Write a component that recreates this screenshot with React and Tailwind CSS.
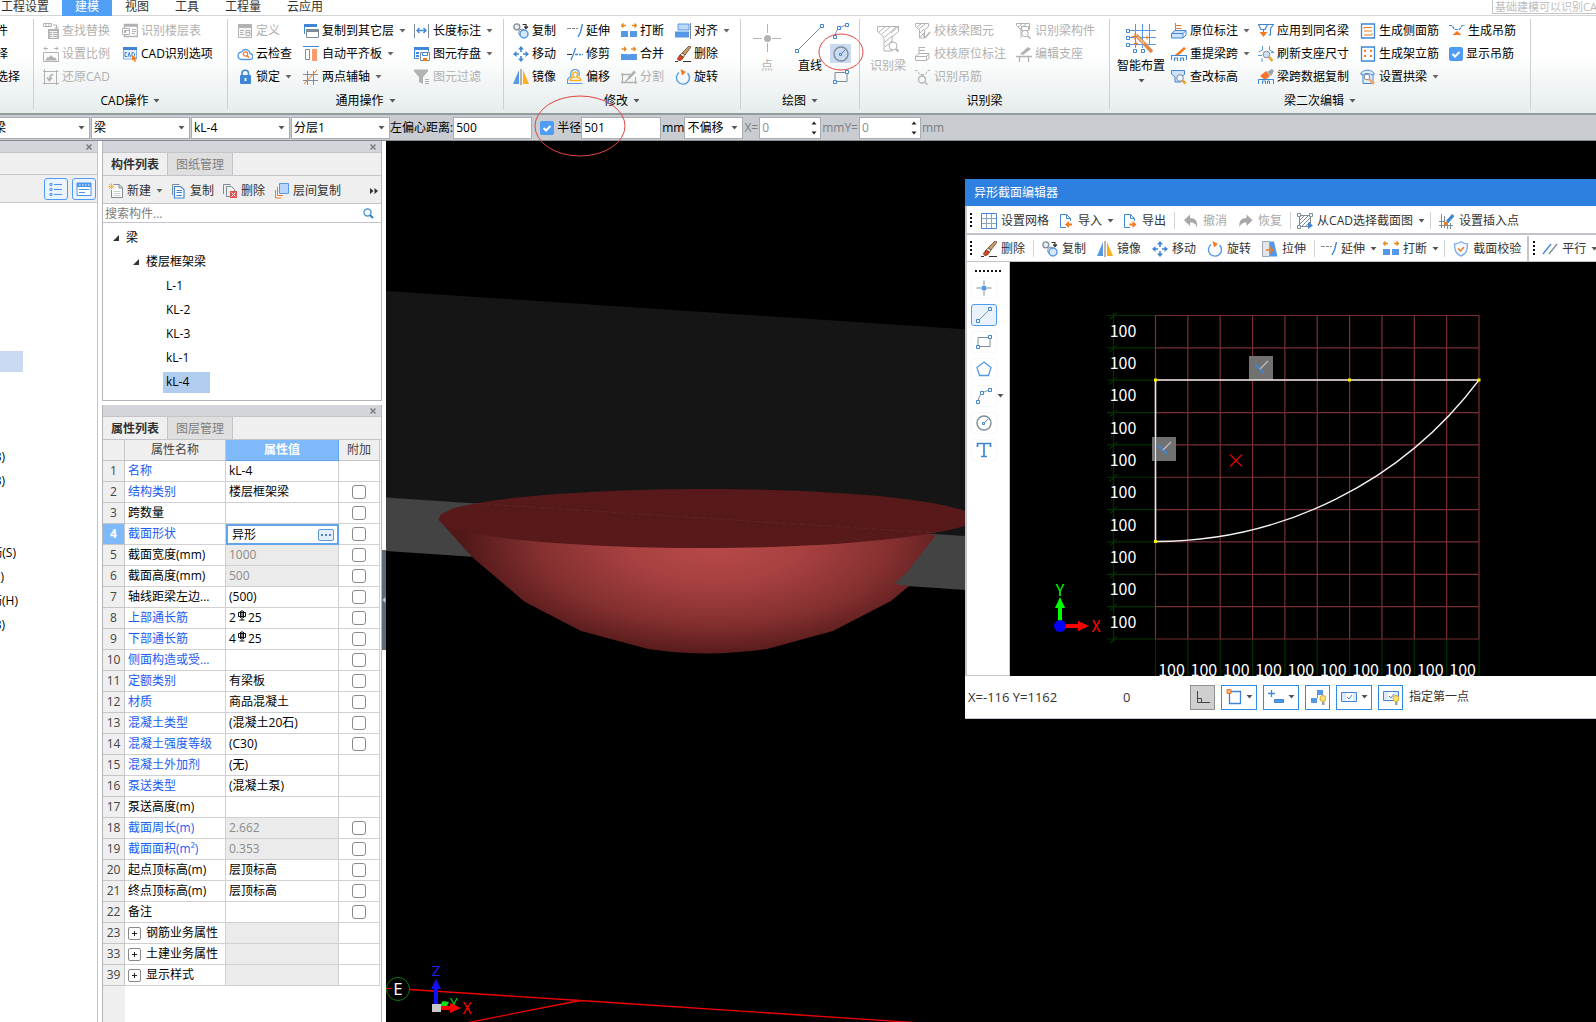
import { useState } from "react";
import clsx from "clsx";

const Svg = ({ size = 16, children, className }) => (
  <svg
    width={size}
    height={size}
    viewBox={`0 0 ${size} ${size}`}
    fill="none"
    aria-hidden="true"
    className={clsx("shrink-0", className)}
  >
    {children}
  </svg>
);

const Caret = ({ className = "text-[#555]" }) => (
  <svg width="7" height="4" viewBox="0 0 7 4" aria-hidden="true" className={clsx("shrink-0", className)}>
    <path d="M0.5 0h6L3.5 3.5z" fill="currentColor" />
  </svg>
);

const BLUE = "#3f86d6";
const SKY = "#5599e6";
const GRAY = "#b2b2b2";
const STEEL = "#7e8c98";
const ORANGE = "#f47a20";

const icons = {
  findReplace: (
    <Svg>
      <path d="M0.5 0.5h8v3h-8zM3 0.5v3M6 0.5v3M10 2h3.5v3M11.5 4l2 2 2-2" stroke={GRAY} />
      <path d="M5 6h11v10H5z" fill={GRAY} />
      <path d="M6.5 8.5h8M6.5 10.5h8M6.5 12.5h8M6.5 14.5h8M9.5 8v7" stroke="#fff" strokeWidth="0.8" />
    </Svg>
  ),
  scale: (
    <Svg>
      <path d="M1 2.5h4M3 0.5l-2 2 2 2M11 2.5h4M13 0.5l2 2-2 2M0.5 6.5h15v9H0.5z" stroke={GRAY} />
      <path d="M2 14.5l3-4 1 1 2-2.5 3 3 1-1 2 3.5z" fill={GRAY} />
    </Svg>
  ),
  restore: (
    <Svg>
      <path d="M1.5 0v15.5M0 2.5h15.5M13.5 1v15M0 14.5h16" stroke={GRAY} />
      <path d="M10.5 5.5c-3 0-4 1.5-4 5M4 8.5l2.5 3 2.5-3" stroke={GRAY} strokeWidth="1.5" />
    </Svg>
  ),
  floorTable: (
    <Svg>
      <path d="M2.5 1.5h13v12h-13zM2.5 3h13" stroke={GRAY} strokeWidth="1.5" />
      <path d="M0 5h8v7H0z" fill="#fff" />
      <path d="M0.5 5.5h7v6h-7zM4 7.5h3M10 6.5h4M10 8.5h4M10 10.5h3" stroke={GRAY} />
      <path d="M2 7h2v3H2z" fill={GRAY} />
    </Svg>
  ),
  cadOptions: (
    <Svg>
      <path d="M1.5 2h13v11h-13z" fill="#e8f1fc" stroke="#7fb0ea" />
      <path d="M1 1h14v3H1z" fill={BLUE} />
      <path d="M5 6.5H3v4h2M6 11l1.2-4.5L8.5 11M10 6.5v4h1.5l1-1v-2l-1-1z" stroke={BLUE} />
      <path d="M10 9l5 3.5-2 .5 1 2.5-1.5.5-1-2.5-1.5 1z" fill={ORANGE} />
    </Svg>
  ),
  define: (
    <Svg>
      <path d="M1.5 1.5h13v13h-13z" stroke={GRAY} fill="#f6f6f6" />
      <path d="M1 1h14v4H1z" fill={GRAY} />
      <path d="M3 7.5h4M3 9.5h3M3 11.5h4M9 7.5h4v5H9zM9 9.5h4" stroke={GRAY} />
    </Svg>
  ),
  cloud: (
    <Svg>
      <path d="M4 13.5h8.5a3 3 0 0 0 .5-6 4.5 4.5 0 0 0-8.5-1.5A3.8 3.8 0 0 0 4 13.5z" stroke={SKY} strokeWidth="1.3" />
      <circle cx="8.5" cy="8" r="2.2" stroke={ORANGE} strokeWidth="1.2" />
      <path d="M10 9.8l2 2" stroke={ORANGE} strokeWidth="1.4" />
    </Svg>
  ),
  lock: (
    <Svg>
      <path d="M5 7V4.5a3.2 3.2 0 0 1 6.5 0V7" stroke={BLUE} strokeWidth="1.6" />
      <rect x="3" y="6" width="11" height="9" rx="1" fill={BLUE} />
      <path d="M8.5 9v3" stroke="#fff" strokeWidth="1.8" />
    </Svg>
  ),
  copyFloors: (
    <Svg>
      <path d="M1.5 11V1.5h12V4" stroke={BLUE} />
      <path d="M1 1h13v3H1z" fill={BLUE} />
      <path d="M3.5 6.5h12v8h-12z" fill="#fff" stroke={STEEL} />
      <path d="M3 6h13v3H3z" fill={STEEL} />
    </Svg>
  ),
  alignSlab: (
    <Svg>
      <path d="M0 0.5h16" stroke={BLUE} />
      <path d="M2.5 3.5h4v10h-4z" stroke={STEEL} />
      <path d="M9 3h5v12H9z" fill="#fb9a6a" />
    </Svg>
  ),
  auxAxis: (
    <Svg>
      <path d="M0 5.5h15M0 11.5h15M4.5 2v14M10.5 2v14" stroke={STEEL} />
      <path d="M1 15L14 1" stroke={ORANGE} />
    </Svg>
  ),
  length: (
    <Svg>
      <path d="M0.5 1v14M14.5 1v14" stroke={STEEL} />
      <path d="M3 7.5h9M5.5 5L3 7.5 5.5 10M9.5 5L12 7.5 9.5 10" stroke={BLUE} strokeWidth="1.3" />
    </Svg>
  ),
  saveElem: (
    <Svg>
      <path d="M0.5 1.5h14v4M0.5 1.5v11H5" stroke={BLUE} />
      <path d="M0 1h15v3H0zM2 6h3v2H2zM2 9h3v2H2z" fill={BLUE} />
      <path d="M6.5 6.5h9v8h-9z" fill="#fff" stroke={STEEL} />
      <path d="M8.5 6.5h5v3h-5z" stroke={BLUE} />
      <path d="M9 12h4v3H9z" fill={ORANGE} />
    </Svg>
  ),
  filter: (
    <Svg>
      <path d="M0 0.5h14v2L9 8v7l-4-2V8L0 2.5z" fill={GRAY} />
      <path d="M11 10.5h4M11 12.5h4M11 14.5h4" stroke={GRAY} />
    </Svg>
  ),
  copy: (
    <Svg>
      <circle cx="3.8" cy="3.8" r="3" stroke={STEEL} fill="#e8edf2" strokeWidth="1.3" />
      <circle cx="9" cy="9.5" r="3.4" stroke={STEEL} fill="#fff" />
      <circle cx="11" cy="11" r="4" stroke={SKY} fill="#d5e7fb" strokeWidth="1.5" />
      <path d="M9.5 1.5h3.5v3M11.3 3.5L13 5.5l2-2" stroke="#333" strokeWidth="1.2" />
    </Svg>
  ),
  move: (
    <Svg>
      <path d="M8 0l3 3.5H5zM8 16l-3-3.5h6zM0 8l3.5-3v6zM16 8l-3.5 3V5z" fill={BLUE} />
      <path d="M8 3v3M8 10v3M3 8h3M10 8h3" stroke={BLUE} strokeWidth="1.6" />
    </Svg>
  ),
  mirror: (
    <Svg>
      <path d="M6 1v14H0z" fill={SKY} />
      <path d="M10 1v14h6z" fill="#fbb01e" />
      <path d="M8 0v16" stroke="#8a6a4a" />
    </Svg>
  ),
  extend: (
    <Svg>
      <path d="M0 5.5h4M5 5.5h3M9 5.5h2" stroke={STEEL} strokeWidth="1.1" />
      <path d="M15.5 1l-2 8-2.5 5" stroke={BLUE} strokeWidth="1.4" />
    </Svg>
  ),
  trim: (
    <Svg>
      <path d="M0 8.5h5" stroke="#333" />
      <path d="M8.5 2l-2 6L4 14M8 8.5h3M12 8.5h2M15 8.5h1" stroke={BLUE} strokeWidth="1.3" />
    </Svg>
  ),
  offset: (
    <Svg>
      <path d="M3 11.5c-.5-3 2-3 4-3.5-2-2-1.5-5 1-5s3.500 3 1.500 5c2 .5 4.500.5 4 3.500z" stroke="#fbb01e" strokeWidth="1.5" />
      <path d="M15.500 14.500H0.500c-.5-5 1-6 3.500-7C3 3 5 0.500 8 0.500s5 2 4 6.500" stroke={SKY} strokeWidth="1.2" />
    </Svg>
  ),
  breakIcon: (
    <Svg>
      <path d="M0 8h7v6H0zM9 8h7v6H9z" fill={SKY} />
      <path d="M0.5 2.5H5M2.5 0.5l-2 2 2 2M11 2.5h4.5M13.5 0.5l2 2-2 2" stroke="#e08a1e" strokeWidth="1.3" />
    </Svg>
  ),
  merge: (
    <Svg>
      <path d="M0 8h16v6H0z" fill={SKY} />
      <path d="M6 8h4" stroke="#fff" strokeDasharray="1 1" />
      <path d="M0.5 3H5M3 1l2 2-2 2M10 3h4.5M12.5 1l2 2-2 2" stroke="#e08a1e" strokeWidth="1.3" />
    </Svg>
  ),
  split: (
    <Svg>
      <path d="M1.5 4v10M0 5.5h10M0 13.5h16M14.5 8v7M4 13l4-4" stroke={GRAY} strokeWidth="1.3" />
      <path d="M6 11l1-3 6-6.500 2 2-6 6z" fill={GRAY} />
    </Svg>
  ),
  align: (
    <Svg>
      <path d="M3 1h11v6H3z" fill="#bcd7f7" stroke={SKY} />
      <path d="M0 8.5h14v6H0z" fill={SKY} />
      <path d="M15.5 0v16" stroke={STEEL} />
    </Svg>
  ),
  erase: (
    <Svg>
      <path d="M0 15.5h3M8 15.5h8" stroke="#333" />
      <path d="M14 0l2 1-6 8-3-2z" fill="#c9a06a" stroke="#5a4630" strokeWidth="0.8" />
      <path d="M7 7l3 2-1.5 2.5-4-2z" fill="#e9e4dc" stroke="#5a4630" strokeWidth="0.7" />
      <path d="M5 9l3.5 2-2 3c-2 1-4 .5-4-1.5z" fill="#d5481c" stroke="#6a2a14" strokeWidth="0.7" />
    </Svg>
  ),
  rotate: (
    <Svg>
      <path d="M4 3.5A6.5 6.5 0 1 0 12.5 4" stroke={SKY} strokeWidth="1.4" />
      <path d="M5.5 0l5.5 3-4 3.5z" fill={ORANGE} />
    </Svg>
  ),
  bigPoint: (
    <Svg size={30}>
      <path d="M15.5 1v9M15.5 20v9M1 15.5h9M20 15.5h9" stroke={GRAY} />
      <circle cx="15.5" cy="15.5" r="3.5" fill={GRAY} />
    </Svg>
  ),
  bigLine: (
    <Svg size={30}>
      <path d="M3 27L27 3" stroke={STEEL} />
      <path d="M0.5 26.5h3v3h-3zM25.5 1.5h3v3h-3z" stroke={BLUE} fill="#fff" />
    </Svg>
  ),
  arc: (
    <Svg>
      <path d="M2 14C2.5 8 5 4 14 2" stroke={STEEL} />
      <path d="M0.5 12.5h3v3h-3zM4.5 3.5h3v3h-3zM12.5 0.5h3v3h-3z" stroke={BLUE} fill="#fff" />
    </Svg>
  ),
  circle: (
    <Svg>
      <circle cx="8" cy="8" r="7" stroke={STEEL} strokeWidth="1.4" />
      <path d="M8 8l4-4" stroke={BLUE} />
      <path d="M6.5 7.5h2v2h-2z" stroke={BLUE} fill="#fff" />
    </Svg>
  ),
  rect: (
    <Svg>
      <path d="M2 3.5h12v9H2z" stroke={STEEL} />
      <path d="M0.5 11.5h3v3h-3zM12.5 1.5h3v3h-3z" stroke={BLUE} fill="#fff" />
    </Svg>
  ),
  bigFilter: (
    <Svg size={30}>
      <path d="M4.5 3.5h21v5L19 14v14h-8V14L4.5 8.500zM6 9l6-5M9 11l8-7M12 14l11-10M12 19l7-6M12 24l7-6M18 10l7-6" stroke={GRAY} />
      <circle cx="20" cy="23" r="4" fill="#fff" stroke={GRAY} />
      <path d="M23 26l2.5 2.5" stroke={GRAY} strokeWidth="2" />
    </Svg>
  ),
  checkElem: (
    <Svg>
      <path d="M0.5 0.5h13v3L9.5 7v8h-5V7l-4-3.500zM2 4l4-3M4 6l6-5M5 10l4-4M5 14l4-4" stroke={GRAY} />
      <path d="M8 12l2.5 2.5L15 9" stroke={GRAY} strokeWidth="1.5" />
    </Svg>
  ),
  checkAnno: (
    <Svg>
      <path d="M4 8V1M4 4.5h6M4 1.5h6M0.5 10.5L4 7.5h10l-2.500 3v4H0.5zM0.5 10.5h11M14 8v4l-2 2.500" stroke={GRAY} />
    </Svg>
  ),
  hanger: (
    <Svg>
      <path d="M0 1.5h2l3 4h5l3-4h3" stroke={GRAY} strokeDasharray="3 1" />
      <circle cx="7" cy="10.5" r="3.5" stroke={GRAY} strokeWidth="1.3" />
      <path d="M9.5 13l3 2.5" stroke={GRAY} strokeWidth="1.5" />
    </Svg>
  ),
  beamPart: (
    <Svg>
      <path d="M0.5 0.5h13v6M0.5 0.5v2L5 7v8M2 4l4-3M4 6l6-5M5.5 3.5h7v4h-7z" stroke={GRAY} />
      <circle cx="9" cy="10.5" r="3.2" stroke={GRAY} fill="#fff" />
      <path d="M11.5 13l3 2.5" stroke={GRAY} strokeWidth="1.6" />
    </Svg>
  ),
  support: (
    <Svg>
      <path d="M4 8l8-7 3 2-8 6z" fill={GRAY} />
      <path d="M0 10.5h16M3.5 11v5M12.5 11v5" stroke={GRAY} strokeWidth="1.3" />
    </Svg>
  ),
  smart: (
    <Svg size={30}>
      <path d="M4 7.5h26M4 14.5h26M4 21.5h26M9.5 1v24M16.5 1v24M23.5 1v20" stroke={SKY} />
      <path d="M0.5 6.5h3v3h-3zM0.5 13.5h3v3h-3zM0.5 20.5h3v3h-3zM7.5 26.5h3v3h-3zM15.5 26.5h3v3h-3z" stroke={BLUE} fill="#fff" />
      <path d="M10 12l16 17" stroke="#d98a4a" strokeWidth="3.5" />
      <path d="M10 12l8 8.5" stroke="#f6c79a" strokeWidth="1.5" />
      <path d="M9 10v7M5.5 13.5h7M19 14.5h4M21 12.5v4M8 20.5h4M10 18.5v4" stroke={ORANGE} />
    </Svg>
  ),
  inPlace: (
    <Svg>
      <path d="M4.5 8V0M4.5 2.5h6M4.5 5.5h6" stroke="#e07b3a" />
      <path d="M0.5 10.5L4 7.5h11l-3 3v4.5H0.5z" fill="#cfe2f8" stroke={BLUE} />
      <path d="M0.5 10.5H12M15 8v4l-3 3" stroke={BLUE} />
    </Svg>
  ),
  respan: (
    <Svg>
      <path d="M4 9l9-8 2 1.5L8 9z" fill={ORANGE} />
      <path d="M0.5 14V9.5h15V14M3.5 15v-3h3v3M9.5 15v-3h3v3" stroke={BLUE} strokeWidth="1.2" />
    </Svg>
  ),
  elevation: (
    <Svg>
      <path d="M0.5 1.5h13v4L10 8v5H4V8L0.5 5z" fill="#cfe2f8" stroke={BLUE} />
      <circle cx="9" cy="9" r="3.3" fill="#e8f4ff" stroke={STEEL} />
      <path d="M11.5 11.5l3 3" stroke="#f5a020" strokeWidth="2.5" />
    </Svg>
  ),
  applySame: (
    <Svg>
      <path d="M0.5 1.5h9L7 6.5H3zM10 1.5h5.5l-3 4V12h-2" stroke={BLUE} strokeWidth="1.2" />
      <path d="M5.5 6v4" stroke={BLUE} />
      <path d="M1.5 9h8l-4 5z" fill={ORANGE} />
    </Svg>
  ),
  refresh: (
    <Svg>
      <path d="M4.5 0v4l-4 2M11.5 0v4l4 2M0 9.5h4M4 16v-4M13 6.5h3" stroke={SKY} />
      <circle cx="8.5" cy="8.5" r="3.3" fill="#cfe2f8" stroke={STEEL} />
      <path d="M11 11l3.5 4" stroke="#f5a020" strokeWidth="2.5" />
    </Svg>
  ),
  spanCopy: (
    <Svg>
      <path d="M2 7l6-5 4 5-5 4z" fill="#f4762c" />
      <path d="M9 3l5-3 2 2-3 5z" fill="#9aa2aa" />
      <path d="M0.5 15V10.5h15V15M4.5 15v-3h3v3M9.5 15v-3h2v3" stroke={BLUE} />
    </Svg>
  ),
  sideBar: (
    <Svg>
      <path d="M1.5 1h13v14h-13z" stroke={BLUE} strokeWidth="1.3" />
      <path d="M4 4.5h8M4 8h8M4 12h8M4 4.5v1.5M12 12v-1.5" stroke={ORANGE} />
    </Svg>
  ),
  erectBar: (
    <Svg>
      <path d="M1.5 1h13v14h-13z" stroke={BLUE} strokeWidth="1.3" />
      <path d="M4 4h2v2H4zM10 4h2v2h-2zM4 9h2v2H4zM10 9h2v2h-2z" fill={ORANGE} />
    </Svg>
  ),
  arch: (
    <Svg>
      <path d="M0.5 5C3 0 12 0 14.5 5L12 6C9 4 5 4 3 6zM3 6v8.5h10V6" stroke={BLUE} fill="#e4effc" />
      <circle cx="7" cy="8" r="2.8" fill="#fff" stroke={STEEL} />
      <path d="M9 10l5 5" stroke="#f5a56a" strokeWidth="2.5" />
    </Svg>
  ),
  genHanger: (
    <Svg>
      <path d="M0 2.5h3l2.5 4h5l2.5-4h3" stroke={BLUE} strokeDasharray="3 1" strokeWidth="1.2" />
      <path d="M8 8l4.5 4h-9z" fill={ORANGE} />
    </Svg>
  ),
  grid: (
    <Svg>
      <path d="M0.5 0.5h15v15H0.5z" stroke={BLUE} />
      <path d="M5.5 1v14M10.5 1v14M1 5.5h14M1 10.5h14" stroke="#8fa3b8" />
    </Svg>
  ),
  importIcon: (
    <Svg>
      <path d="M8 14.5H2.5v-13h6l4 4V8M8.5 1.5v4h4" stroke={BLUE} />
      <path d="M7 11.5l4-3.5v2.5h3v2h-3V15z" fill={ORANGE} />
    </Svg>
  ),
  exportIcon: (
    <Svg>
      <path d="M8 14.5H2.5v-13h6l4 4V8M8.5 1.5v4h4" stroke={BLUE} />
      <path d="M14.5 11.5l-4-3.5v2.5h-3v2h3V15z" fill={ORANGE} />
    </Svg>
  ),
  undo: (
    <Svg>
      <path d="M7 1.5v3.500c5 0 8 3 7 9.500-1-3.500-3-5-7-5v3.500L1 7.2z" fill="#a8a8a8" />
    </Svg>
  ),
  redo: (
    <Svg>
      <path d="M8.500 1.500v3.500c-5 0-8 3-7 9.500 1-3.500 3-5 7-5v3.500L14.500 7.200z" fill="#a8a8a8" />
    </Svg>
  ),
  pickSection: (
    <Svg>
      <path d="M2.5 2.5h11v11h-11zM3 7l4-4M3 11l8-8M5 13l8-8M9 13l4-4" stroke={STEEL} />
      <path d="M0.5 0.5h3v3h-3zM12.5 0.5h3v3h-3zM0.5 12.5h3v3h-3z" stroke={STEEL} fill="#fff" />
      <path d="M11 9l5 3.5-5 3.5z" fill={BLUE} />
    </Svg>
  ),
  insertPoint: (
    <Svg>
      <path d="M2.5 1v14M5.5 3v12M0 12.5h14M8.5 10v6M11.5 10v6M0 8.5h5" stroke={STEEL} />
      <path d="M7 8l6-7 2.5 2-6 7z" fill={BLUE} />
      <path d="M5 9h4v3H5z" fill={ORANGE} />
    </Svg>
  ),
  stretch: (
    <Svg>
      <path d="M0.5 0.5h7v15h-7z" fill="#e2e5ea" stroke="#9aa6b2" />
      <path d="M8 0.5h4L15.5 15.5H8z" fill={SKY} />
      <path d="M4 9h6M8 6l3 3-3 3" stroke={ORANGE} strokeWidth="1.3" />
    </Svg>
  ),
  shield: (
    <Svg>
      <path d="M8 0.8c2 1.4 4 2 6.5 2.2 0 6-1 9.5-6.5 12.2C2.5 12.5 1.5 9 1.5 3 4 2.8 6 2.2 8 .8z" stroke="#82b1ea" fill="#f3f8fe" strokeWidth="1.4" />
      <path d="M5 7.5L7.5 10 11 6" stroke={ORANGE} strokeWidth="1.4" />
    </Svg>
  ),
  parallel: (
    <Svg>
      <path d="M1 13L9 3" stroke={BLUE} strokeWidth="1.3" />
      <path d="M7 13l8-10" stroke={STEEL} strokeWidth="1.3" />
    </Svg>
  ),
  point: (
    <Svg>
      <path d="M8 0.5v4.5M8 11v4.5M0.5 8H5M11 8h4.5" stroke={STEEL} />
      <circle cx="8" cy="8" r="2.6" fill={SKY} />
    </Svg>
  ),
  line: (
    <Svg>
      <path d="M2 14L14 2" stroke={STEEL} />
      <path d="M0.5 12.5h3v3h-3zM12.5 0.5h3v3h-3z" stroke={BLUE} fill="#fff" />
    </Svg>
  ),
  polygon: (
    <Svg>
      <path d="M8 1l7 5.5-2.5 8h-9L1 6.5z" stroke={SKY} strokeWidth="1.3" />
    </Svg>
  ),
  textTool: (
    <Svg>
      <path d="M1.5 5V1.5h13V5M8 1.5v13M5 14.5h6" stroke={BLUE} strokeWidth="1.7" />
    </Svg>
  ),
  newItem: (
    <Svg>
      <path d="M5 1.5h6l3.5 3v10h-11V7M11 1.5v3.500h3.500" stroke={STEEL} fill="#fff" />
      <path d="M5.5 8.5h7M5.5 10.5h7M5.5 12.5h7" stroke="#ccc" />
      <path d="M0.5 3.5h6M3.5 0.5v6M1 1l5 5M6 1L1 6" stroke="#f5a020" strokeDasharray="1.5 0.5" />
    </Svg>
  ),
  copyDoc: (
    <Svg>
      <path d="M1.5 12V1.5h7" stroke={STEEL} />
      <path d="M3.5 3.5h6l3.5 3v8.5H3.500z" stroke={BLUE} fill="#fff" strokeWidth="1.2" />
      <path d="M5.5 7.5h5.5M5.5 9.5h5.5M5.5 12.5h5.5" stroke={BLUE} />
    </Svg>
  ),
  deleteDoc: (
    <Svg>
      <path d="M1.5 11V1.5h7M4.5 14V3.5h5l3 3V8M4.5 13.5H8" stroke={STEEL} />
      <path d="M8 8h7v7H8z" fill="#d9534f" />
      <path d="M9.5 9.5l4 4M13.5 9.5l-4 4" stroke="#fff" />
    </Svg>
  ),
  layerCopy: (
    <Svg>
      <path d="M5.5 0.5h9v10h-9z" fill="#b9d6fa" stroke={SKY} />
      <path d="M3.5 4v8.5H9M1.5 7v8H7" stroke={ORANGE} />
    </Svg>
  ),
};

const RibbonButton = ({ icon, label, disabled, caret }) => (
  <button
    type="button"
    disabled={disabled}
    className="flex h-[23px] items-center gap-[3px] whitespace-nowrap text-black disabled:text-[#b0b0b0]"
  >
    {icons[icon]}
    <span>{label}</span>
    {caret && <Caret className="ml-0.5 text-[#666]" />}
  </button>
);

const RibbonColumn = ({ items, className }) => (
  <div className={clsx("flex flex-col items-start", className)}>
    {items.map(([icon, label, flag]) => (
      <RibbonButton key={label} icon={icon} label={label} disabled={flag === "off"} caret={flag === "menu"} />
    ))}
  </div>
);

const RibbonGroup = ({ title, caret = true, className, children }) => (
  <div className={clsx("flex shrink-0 flex-col border-r border-[#cdd0d2]", className)}>
    <div className="flex h-[70px] shrink-0">{children}</div>
    <button type="button" className="flex h-6 shrink-0 items-center justify-center gap-[5px]">
      {title}
      {caret && <Caret />}
    </button>
  </div>
);

const BigButton = ({ icon, label, disabled, caret, className }) => (
  <button
    type="button"
    disabled={disabled}
    className={clsx("flex flex-col items-center pt-1 whitespace-nowrap text-black disabled:text-[#b0b0b0]", className)}
  >
    {icons[icon]}
    <span className="mt-[5px]">{label}</span>
    {caret && <Caret className="mt-[5px] text-[#555]" />}
  </button>
);

const CheckBox = ({ label, defaultChecked = true, className }) => (
  <label className={clsx("flex items-center gap-[3px] whitespace-nowrap", className)}>
    <span className="relative flex size-[14px]">
      <input
        type="checkbox"
        defaultChecked={defaultChecked}
        className="peer size-[14px] appearance-none rounded-[2px] border border-[#4f9cf5] bg-white checked:bg-[#4f9cf5]"
      />
      <svg viewBox="0 0 14 14" fill="none" className="pointer-events-none absolute inset-0 hidden peer-checked:block">
        <path d="M3.5 7l2.5 2.5L10.5 5" stroke="#fff" strokeWidth="2" />
      </svg>
    </span>
    {label}
  </label>
);

const menuTabs = ["工程设置", "建模", "视图", "工具", "工程量", "云应用"];

const MenuBar = () => {
  const [active, setActive] = useState("建模");
  return (
    <header className="flex h-4 shrink-0 items-start justify-between border-b border-[#d5d5d5] bg-white">
      <nav className="flex">
        {menuTabs.map((tab, i) => (
          <button
            key={tab}
            type="button"
            onClick={() => setActive(tab)}
            className={clsx(
              "h-4 pr-[13px] pb-[3px] leading-[13px]",
              i === 0 ? "pl-px" : "pl-[13px]",
              tab === active ? "bg-[#4f9ff7] text-white" : "text-[#333]"
            )}
          >
            {tab}
          </button>
        ))}
      </nav>
      <input
        type="text"
        aria-label="搜索"
        placeholder="基础建模可以识别CAD"
        className="h-[14px] w-[104px] border border-t-0 border-r-0 border-[#c4c4c4] pl-0.5 text-[11px] leading-[12px] placeholder:text-[#bdbdbd]"
      />
    </header>
  );
};

const Ribbon = () => (
  <div className="flex h-[99px] shrink-0 border-b-2 border-[#929c9f] bg-linear-to-b from-white from-40% to-[#e6ecec] pt-[3px] pb-1">
    <div className="w-[34px] shrink-0 border-r border-[#cdd0d2]">
      {["件", "择", "选择"].map((text) => (
        <button
          key={text}
          type="button"
          className={clsx("flex h-[23px] items-center justify-end overflow-hidden whitespace-nowrap", text === "选择" ? "w-5" : "w-2")}
        >
          {text}
        </button>
      ))}
    </div>
    <RibbonGroup title="CAD操作" className="w-[194px]">
      <RibbonColumn className="ml-[9px]" items={[["findReplace", "查找替换", "off"], ["scale", "设置比例", "off"], ["restore", "还原CAD", "off"]]} />
      <RibbonColumn className="ml-3" items={[["floorTable", "识别楼层表", "off"], ["cadOptions", "CAD识别选项"]]} />
    </RibbonGroup>
    <RibbonGroup title="通用操作" className="w-[276px]">
      <RibbonColumn className="ml-[9px]" items={[["define", "定义", "off"], ["cloud", "云检查"], ["lock", "锁定", "menu"]]} />
      <RibbonColumn className="ml-[11px]" items={[["copyFloors", "复制到其它层", "menu"], ["alignSlab", "自动平齐板", "menu"], ["auxAxis", "两点辅轴", "menu"]]} />
      <RibbonColumn className="ml-2" items={[["length", "长度标注", "menu"], ["saveElem", "图元存盘", "menu"], ["filter", "图元过滤", "off"]]} />
    </RibbonGroup>
    <RibbonGroup title="修改" className="w-[237px]">
      <RibbonColumn className="ml-[9px]" items={[["copy", "复制"], ["move", "移动"], ["mirror", "镜像"]]} />
      <RibbonColumn className="ml-[11px]" items={[["extend", "延伸"], ["trim", "修剪"], ["offset", "偏移"]]} />
      <RibbonColumn className="ml-[11px]" items={[["breakIcon", "打断"], ["merge", "合并"], ["split", "分割", "off"]]} />
      <RibbonColumn className="ml-[11px]" items={[["align", "对齐", "menu"], ["erase", "删除"], ["rotate", "旋转"]]} />
    </RibbonGroup>
    <RibbonGroup title="绘图" className="w-[119px]">
      <BigButton icon="bigPoint" label="点" disabled className="ml-[11px]" />
      <BigButton icon="bigLine" label="直线" className="ml-[13px]" />
      <div className="ml-[5px] flex flex-col">
        {["arc", "circle", "rect"].map((name) => (
          <button
            key={name}
            type="button"
            aria-label={name}
            className={clsx("my-0.5 flex h-[19px] w-[21px] items-center justify-center", name === "circle" && "bg-[#c9daf1]")}
          >
            {icons[name]}
          </button>
        ))}
      </div>
    </RibbonGroup>
    <RibbonGroup title="识别梁" caret={false} className="w-[250px]">
      <BigButton icon="bigFilter" label="识别梁" disabled className="ml-2.5" />
      <RibbonColumn className="ml-[9px]" items={[["checkElem", "校核梁图元", "off"], ["checkAnno", "校核原位标注", "off"], ["hanger", "识别吊筋", "off"]]} />
      <RibbonColumn className="ml-2.5" items={[["beamPart", "识别梁构件", "off"], ["support", "编辑支座", "off"]]} />
    </RibbonGroup>
    <RibbonGroup title="梁二次编辑" className="w-[421px]">
      <BigButton icon="smart" label="智能布置" caret className="ml-[7px]" />
      <RibbonColumn className="ml-1.5" items={[["inPlace", "原位标注", "menu"], ["respan", "重提梁跨", "menu"], ["elevation", "查改标高"]]} />
      <RibbonColumn className="ml-2" items={[["applySame", "应用到同名梁"], ["refresh", "刷新支座尺寸"], ["spanCopy", "梁跨数据复制"]]} />
      <RibbonColumn className="ml-[11px]" items={[["sideBar", "生成侧面筋"], ["erectBar", "生成架立筋"], ["arch", "设置拱梁", "menu"]]} />
      <div className="ml-2.5 flex flex-col items-start">
        <RibbonButton icon="genHanger" label="生成吊筋" />
        <CheckBox label="显示吊筋" className="h-[23px]" />
      </div>
    </RibbonGroup>
  </div>
);

const ComboBox = ({ value, label, className }) => (
  <span className={clsx("relative flex h-[22px] shrink-0", className)}>
    <select aria-label={label} className="w-full appearance-none border border-[#a9adb1] bg-white pl-0.5 text-black">
      <option>{value}</option>
    </select>
    <Caret className="pointer-events-none absolute top-[9px] right-[5px] text-[#555]" />
  </span>
);

const Spinner = ({ label }) => (
  <span className="relative flex h-[22px] w-[62px] shrink-0">
    <input aria-label={label} defaultValue="0" disabled className="w-full border border-[#a9adb1] bg-white pl-0.5 text-[#8c8c8c]" />
    <svg width="6" height="14" viewBox="0 0 6 14" aria-hidden="true" className="absolute top-1 right-1">
      <path d="M0.5 3.5h5L3 0.5zM0.5 10.5h5L3 13.5z" fill="#222" />
    </svg>
  </span>
);

const OptionBar = () => (
  <div className="flex h-[26px] shrink-0 items-center overflow-hidden border-b border-[#878d93] bg-[#c9ccd1] whitespace-nowrap">
    <ComboBox label="构件大类" value="梁" className="mr-px -ml-[9px] w-[99px]" />
    <ComboBox label="构件类型" value="梁" className="mr-px w-[99px]" />
    <ComboBox label="构件" value="kL-4" className="mr-px w-[99px]" />
    <ComboBox label="分层" value="分层1" className="w-[99px]" />
    <label className="flex items-center">
      左偏心距离:
      <input defaultValue="500" className="h-[22px] w-[79px] border border-[#a9adb1] bg-white pl-0.5" />
    </label>
    <CheckBox label="半径" className="ml-2" />
    <input aria-label="半径" defaultValue="501" className="h-[22px] w-20 border border-[#a9adb1] bg-white pl-0.5" />
    <span className="ml-px">mm</span>
    <ComboBox label="偏移方式" value="不偏移" className="w-[59px]" />
    <span className="mx-px text-[#7d8084]">X=</span>
    <Spinner label="X" />
    <span className="mx-px text-[#7d8084]">mmY=</span>
    <Spinner label="Y" />
    <span className="ml-px text-[#7d8084]">mm</span>
  </div>
);

const PanelHeader = () => (
  <div className="flex h-3 shrink-0 items-center justify-end border-b border-[#c3c4c9] bg-[#d4d5da] pr-[5px]">
    <button type="button" aria-label="关闭" className="text-[#777]">
      <svg width="6" height="6" viewBox="0 0 6 6" aria-hidden="true">
        <path d="M0.5 0.5l5 5M5.5 0.5l-5 5" stroke="currentColor" strokeWidth="1.4" />
      </svg>
    </button>
  </div>
);

const PanelTabs = ({ tabs }) => (
  <div className="flex h-[23px] shrink-0 border-b border-[#c3c4c9] bg-[#efefef]">
    {tabs.map((tab, i) => (
      <button
        key={tab}
        type="button"
        className={clsx("w-[65px] border-r border-[#c3c4c9] pt-0.5", i === 0 ? "font-bold text-[#333]" : "bg-[#dfdfdf] text-[#808080]")}
      >
        {tab}
      </button>
    ))}
  </div>
);

// Names of the module tree, only the tails are visible at this dock width
const navRows = Array(18).fill(null);
navRows[10] = ["(B)", "w-[5px]"];
navRows[11] = ["(B)", "w-[5px]"];
navRows[14] = ["筋(S)", "w-4"];
navRows[15] = [")", "w-1"];
navRows[16] = ["筋(H)", "w-[18px]"];
navRows[17] = ["(B)", "w-[5px]"];

const NavPanel = () => (
  <aside className="flex w-[98px] shrink-0 flex-col border-r border-[#c3c4c9] bg-white">
    <PanelHeader />
    <div className="h-[22px] shrink-0 border-b border-[#c3c4c9] bg-[#efefef]" />
    <div className="flex h-7 shrink-0 items-center justify-end gap-1 border-b border-[#c3c4c9] bg-[#efefef] pt-px pr-px">
      <button type="button" aria-label="列表" className="flex h-[22px] w-6 items-center justify-center rounded-[3px] border border-[#4f9cf5] bg-[#eaf3fe]">
        <svg width="14" height="14" viewBox="0 0 14 14" fill="none" aria-hidden="true">
          <path d="M1 1.5h2v2H1zM1 6.5h2v2H1zM1 11.5h2v2H1zM5 2.5h8M5 7.5h8M5 12.5h8" stroke="#4a94ec" />
        </svg>
      </button>
      <button type="button" aria-label="卡片" className="flex h-[22px] w-6 items-center justify-center rounded-[3px] border border-[#4f9cf5] bg-[#eaf3fe]">
        <svg width="16" height="14" viewBox="0 0 16 14" fill="none" aria-hidden="true">
          <path d="M1 1h14v12.5H1z" stroke="#4a94ec" fill="#fff" />
          <path d="M1 1h14v4H1z" fill="#4a94ec" />
          <path d="M3 3h1.5M6 3h1.5M9 3h1.5M12 3h1.5" stroke="#fff" />
          <path d="M3 7.5h10M3 10.5h6" stroke="#4a94ec" />
        </svg>
      </button>
    </div>
    <ul className="pt-0.5">
      {navRows.map((row, i) => (
        <li key={i} className="flex h-6 items-center">
          {i === 6 && <span className="h-[21px] w-[23px] bg-[#c9d9f1]" />}
          {row && <span className={clsx("flex justify-end overflow-hidden whitespace-nowrap", row[1])}>{row[0]}</span>}
        </li>
      ))}
    </ul>
  </aside>
);

const TreeArrow = () => (
  <svg width="6" height="6" viewBox="0 0 6 6" aria-hidden="true" className="mr-[7px]">
    <path d="M6 0v6H0z" fill="#333" />
  </svg>
);

const ComponentPanel = () => {
  const [selected, setSelected] = useState("kL-4");
  return (
    <section className="flex h-[260px] shrink-0 flex-col border border-t-0 border-[#b4b5ba] bg-white">
      <PanelHeader />
      <PanelTabs tabs={["构件列表", "图纸管理"]} />
      <div className="flex h-7 shrink-0 items-center border-b border-[#c3c4c9] bg-[#efefef] pt-0.5 pl-[5px] text-[#333]">
        <button type="button" className="flex items-center gap-[3px]">
          {icons.newItem}新建<Caret className="ml-0.5 text-[#666]" />
        </button>
        <button type="button" className="ml-2 flex items-center gap-[3px]">
          {icons.copyDoc}复制
        </button>
        <button type="button" className="ml-2 flex items-center gap-[3px]">
          {icons.deleteDoc}删除
        </button>
        <button type="button" className="ml-[9px] flex items-center gap-[3px]">
          {icons.layerCopy}层间复制
        </button>
        <button type="button" aria-label="更多" className="mr-[3px] ml-auto">
          <svg width="8" height="6" viewBox="0 0 8 6" aria-hidden="true">
            <path d="M0 0l3.5 3L0 6zM4.5 0L8 3 4.5 6z" fill="#333" />
          </svg>
        </button>
      </div>
      <div className="flex h-[19px] shrink-0 items-center border-b border-[#c3c4c9] pr-[7px]">
        <input type="text" aria-label="搜索构件" placeholder="搜索构件..." className="h-[18px] min-w-0 flex-1 pl-0.5 placeholder:text-[#7c7c7c]" />
        <svg width="11" height="11" viewBox="0 0 11 11" fill="none" aria-hidden="true">
          <circle cx="4.5" cy="4.5" r="3.5" stroke="#4a9ad4" strokeWidth="1.4" />
          <path d="M7 7l3 3" stroke="#2d7fc0" strokeWidth="2" />
        </svg>
      </div>
      <ul className="pt-[3px]">
        <li className="flex h-6 items-center pl-2.5"><TreeArrow />梁</li>
        <li className="flex h-6 items-center pl-[30px]"><TreeArrow />楼层框架梁</li>
        {["L-1", "KL-2", "KL-3", "kL-1", "kL-4"].map((name) => (
          <li key={name} className="flex h-6 items-center pl-[60px]">
            <button
              type="button"
              onClick={() => setSelected(name)}
              className={clsx("h-[21px] w-[47px] pl-[3px] text-left", name === selected && "bg-[#b0ccef]")}
            >
              {name}
            </button>
          </li>
        ))}
      </ul>
    </section>
  );
};

const Rebar = ({ count, size }) => (
  <span className="flex items-center">
    {count}
    <svg width="10" height="12" viewBox="0 0 10 12" fill="none" className="mx-px mb-1">
      <path d="M1.5 2.500h7v4h-7zM5 0v10M2.500 10h5M3.500 1v7M6.500 1v7" stroke="#111" />
    </svg>
    {size}
  </span>
);

// [no, name, value, flags] flags: b = blue name, g = read only, c = has check box, x = expandable
const properties = [
  [1, "名称", "kL-4", "b"],
  [2, "结构类别", "楼层框架梁", "bc"],
  [3, "跨数量", "", "c"],
  [4, "截面形状", "异形", "bc"],
  [5, "截面宽度(mm)", "1000", "gc"],
  [6, "截面高度(mm)", "500", "gc"],
  [7, "轴线距梁左边...", "(500)", "c"],
  [8, "上部通长筋", <Rebar count="2" size="25" />, "bc"],
  [9, "下部通长筋", <Rebar count="4" size="25" />, "bc"],
  [10, "侧面构造或受...", "", "bc"],
  [11, "定额类别", "有梁板", "bc"],
  [12, "材质", "商品混凝土", "bc"],
  [13, "混凝土类型", "(混凝土20石)", "bc"],
  [14, "混凝土强度等级", "(C30)", "bc"],
  [15, "混凝土外加剂", "(无)", "b"],
  [16, "泵送类型", "(混凝土泵)", "b"],
  [17, "泵送高度(m)", "", ""],
  [18, "截面周长(m)", "2.662", "bgc"],
  [19, "截面面积(m²)", "0.353", "bgc"],
  [20, "起点顶标高(m)", "层顶标高", "c"],
  [21, "终点顶标高(m)", "层顶标高", "c"],
  [22, "备注", "", "c"],
  [23, "钢筋业务属性", "", "gx"],
  [33, "土建业务属性", "", "gx"],
  [39, "显示样式", "", "gx"],
];

const PropertyRow = ({ row: [no, name, value, flags] }) => {
  const editing = no === 4;
  return (
    <tr className="h-[21px]">
      <th
        scope="row"
        className={clsx(
          "h-[21px] border-r border-b border-[#c6c6c6] p-0 text-center",
          editing ? "bg-[#7db9fb] font-bold text-white" : "bg-[#efefef] font-normal text-[#444]"
        )}
      >
        {no}
      </th>
      <td className={clsx("h-[21px] border-r border-b border-[#d0d0d0] p-0 pl-[3px] whitespace-nowrap", flags.includes("b") && "text-[#1a5cf5]")}>
        {flags.includes("x") ? (
          <span className="flex items-center gap-[5px]">
            <button type="button" aria-label="展开" className="flex size-[13px] items-center justify-center rounded-[2px] border border-[#888] bg-white">
              <svg width="5" height="5" viewBox="0 0 5 5" aria-hidden="true">
                <path d="M0 2.5h5M2.5 0v5" stroke="#222" />
              </svg>
            </button>
            {name}
          </span>
        ) : (
          name
        )}
      </td>
      <td
        className={clsx(
          "h-[21px] p-0 whitespace-nowrap",
          editing ? "border-2 border-[#62a5e8] pl-1" : "border-r border-b border-[#d0d0d0] pl-[3px]",
          flags.includes("g") && "bg-[#ebebeb] text-[#8c8c8c]"
        )}
      >
        {editing ? (
          <span className="flex items-center justify-between pr-[3px]">
            {value}
            <button type="button" aria-label="编辑截面" className="flex h-3 w-4 items-center justify-center rounded-[2px] border border-[#5a9bd8] bg-[#e3f0fc]">
              <svg width="10" height="2" viewBox="0 0 10 2" aria-hidden="true">
                <path d="M0 0h2v2H0zM4 0h2v2H4zM8 0h2v2H8z" fill="#4a86c8" />
              </svg>
            </button>
          </span>
        ) : (
          value
        )}
      </td>
      <td className="h-[21px] border-r border-b border-[#d0d0d0] p-0">
        {flags.includes("c") && (
          <input
            type="checkbox"
            aria-label={`${name} 附加`}
            className="mx-auto block size-[14px] appearance-none rounded-[3px] border border-[#8a8a8a] bg-white checked:bg-[#4f9cf5]"
          />
        )}
      </td>
    </tr>
  );
};

const PropertyPanel = () => (
  <section className="mt-1 flex min-h-0 flex-1 flex-col overflow-hidden border-x border-[#b4b5ba] bg-white">
    <PanelHeader />
    <PanelTabs tabs={["属性列表", "图层管理"]} />
    <table className="w-[277px] table-fixed border-separate border-spacing-0">
      <colgroup>
        <col className="w-[22px]" />
        <col className="w-[101px]" />
        <col className="w-[113px]" />
        <col className="w-[41px]" />
      </colgroup>
      <thead>
        <tr className="h-[21px] bg-[#efefef] text-[#444]">
          <th className="border-r border-b border-[#c6c6c6] p-0" />
          <th className="border-r border-b border-[#c6c6c6] p-0 font-normal">属性名称</th>
          <th className="border border-t-0 border-l-0 border-[#5fa4ea] bg-[#7db9fb] p-0 font-bold text-white">属性值</th>
          <th className="border-r border-b border-[#c6c6c6] p-0 font-normal">附加</th>
        </tr>
      </thead>
      <tbody>
        {properties.map((row) => (
          <PropertyRow key={row[0]} row={row} />
        ))}
      </tbody>
    </table>
    <div className="w-[22px] flex-1 bg-[#efefef]" />
  </section>
);

const Scene = () => (
  <svg viewBox="386 141 1210 881" preserveAspectRatio="xMinYMin slice" className="absolute inset-0 size-full" aria-label="三维视图">
    <defs>
      <radialGradient id="bowl" gradientUnits="userSpaceOnUse" cx="0" cy="0" r="252" gradientTransform="translate(715 540) scale(1 .47)">
        <stop offset="0" stopColor="#b84a4a" />
        <stop offset="0.35" stopColor="#a94141" />
        <stop offset="0.7" stopColor="#853030" />
        <stop offset="1" stopColor="#521818" />
      </radialGradient>
    </defs>
    <path d="M386 291L1596 371V583L386 498z" fill="#151515" />
    <path d="M386 497.5L965 536l60 4v54L386 551z" fill="#434343" />
    <path
      d="M439 520L472 557L525 602L581 631L648 649Q675 653 705 653.5Q740 653 767 649L833 631L891 601L909 586L894 584L907 572L936 535L705 510z"
      fill="url(#bowl)"
    />
    <path
      d="M438.5 520L441 514L454 508C500 496 600 489 705 489C830 489 930 498 965 511L972 518L965 526C920 539 820 548 705 548C600 548 490 541 448 527z"
      fill="#571919"
    />
    <path d="M476 503.5L936 533" stroke="#5f2a2a" strokeDasharray="6 3" strokeWidth="0.8" />
    <path d="M386 988L580 1000.5L921 1023M580 1000.5L466 1023" stroke="#f00000" strokeWidth="1.3" fill="none" />
    <circle cx="398" cy="989" r="11.5" fill="#000" stroke="#0b7d12" />
    <path d="M386.5 988.5h5" stroke="#f00000" />
    <text x="398" y="995" textAnchor="middle" fontSize="17" fill="#fff">E</text>
    <text x="436" y="976" textAnchor="middle" fontSize="15" fill="#2222ee">Z</text>
    <path d="M436 979l5 10h-10z" fill="#1010f0" />
    <path d="M436 988v16" stroke="#1010f0" strokeWidth="4" />
    <path d="M439 1006l4-5 6 1-3 6z" fill="#10e010" />
    <text x="454" y="1008" textAnchor="middle" fontSize="14" fill="#18d818">Y</text>
    <path d="M432 1004h9v8h-9z" fill="#c8c8c8" />
    <path d="M441 1008h10" stroke="#f00" strokeWidth="4" />
    <path d="M450 1003l11 5-11 5z" fill="#f00" />
    <text x="467" y="1014" textAnchor="middle" fontSize="16" fill="#f00">X</text>
  </svg>
);

const EditorButton = ({ icon, label, disabled, caret }) => (
  <button
    type="button"
    disabled={disabled}
    className={clsx(
      "flex h-[21px] shrink-0 items-center gap-1 rounded-[3px] border-y border-transparent whitespace-nowrap text-[#333] disabled:text-[#a8a8a8]",
      caret ? "pr-0.5 pl-[3px]" : "border-[#f6f6f6] px-[5px]"
    )}
  >
    {icons[icon]}
    {label}
    {caret && <Caret className="ml-px text-[#555]" />}
  </button>
);

const Divider = () => <span className="mx-0.5 h-[17px] w-px shrink-0 bg-[#d3d3d6]" />;

const Grip = () => <span className="mr-[3px] ml-[3px] h-[15px] w-0.5 shrink-0 bg-[repeating-linear-gradient(to_bottom,#111_0_2px,transparent_2px_4px)]" />;

const STEP = 32.35;
const GX = 1155.5;
const GY = 315.5;
const cells = Array.from({ length: 10 }, (_, i) => i);
const lines = Array.from({ length: 11 }, (_, i) => i);

const Snap = ({ x, y }) => (
  <g transform={`translate(${x} ${y})`}>
    <rect width="24" height="24" fill="#717171" />
    <path d="M6 8l9 9" stroke="#3f86d6" strokeWidth="1.8" />
    <path d="M11 13l8-8" stroke="#b8b8b8" strokeWidth="1.5" />
  </g>
);

const SectionCanvas = () => (
  <svg width="586" height="414" viewBox="1010 262 586 414" className="bg-black" aria-label="截面图">
    <g stroke="#003200" strokeWidth="1.2">
      <path d={`M1113.5 ${GY - 3}V642`} />
      {lines.map((i) => (
        <path key={i} d={`M1107 ${GY + i * STEP}H${GX}M1110 ${GY + i * STEP + 4}l7-7M${GX + i * STEP} 639V676`} />
      ))}
    </g>
    <g stroke="#782f33" strokeWidth="1.2">
      {lines.map((i) => (
        <path key={i} d={`M${GX + i * STEP} ${GY}v${STEP * 10}M${GX} ${GY + i * STEP}h${STEP * 10}`} />
      ))}
    </g>
    <g fill="#fff" fontSize="16" textAnchor="middle" className="font-['Noto_Sans_CJK_SC']">
      {cells.map((i) => (
        <text key={i} x="1123" y={GY + i * STEP + 21}>100</text>
      ))}
      {cells.map((i) => (
        <text key={i} x={GX + i * STEP + 16} y="676">100</text>
      ))}
    </g>
    <Snap x={1249} y={356} />
    <path d="M1155.5 541.5V380H1479" stroke="#e8e8e8" strokeWidth="1.6" fill="none" />
    <path d="M1155.5 541.5A404.4 404.4 0 0 0 1479 380" stroke="#f4f4f4" strokeWidth="1.3" fill="none" />
    <Snap x={1152} y={437} />
    <path d="M1155.5 437v24" stroke="#e8e8e8" strokeWidth="1.2" />
    <path d="M1154 378.5h3v3h-3zM1348 378.5h3v3h-3zM1477.5 378.5h3v3h-3zM1154 540h3v3h-3z" fill="#ffef00" />
    <path d="M1230 454.5l12 12M1242 454.5l-12 12" stroke="#e00000" strokeWidth="1.3" />
    <path d="M1060 626v-20" stroke="#0f0" strokeWidth="4" />
    <path d="M1060 597l5 11h-10z" fill="#0f0" />
    <path d="M1060 626h20" stroke="#f00" strokeWidth="4" />
    <path d="M1089 626l-11 5v-10z" fill="#f00" />
    <circle cx="1060" cy="626" r="6" fill="#00f" />
    <text x="1060" y="596" textAnchor="middle" fontSize="16" fill="#0f0" className="font-['Noto_Sans_CJK_SC']">Y</text>
    <text x="1096" y="632" textAnchor="middle" fontSize="16" fill="#f00" className="font-['Noto_Sans_CJK_SC']">X</text>
  </svg>
);

const bulb = (
  <g>
    <circle cx="13" cy="9.5" r="3" fill="#fde27a" stroke="#e0a520" />
    <path d="M12 13h2.5v3H12z" fill="#9aa0a6" />
  </g>
);

const snapButtons = [
  { label: "捕捉", menu: true, icon: <Svg><path d="M3.5 2.5h11v12h-11z" stroke={BLUE} strokeWidth="1.3" /><path d="M1 0.5h4v4H1z" fill="#f6b28a" stroke={ORANGE} /></Svg> },
  { label: "坐标输入", menu: true, icon: <Svg><path d="M0 4.5h7M3.5 1v7" stroke={BLUE} strokeWidth="1.3" /><path d="M6.5 10.5h9v3h-9z" fill={SKY} stroke={BLUE} /></Svg> },
  { label: "跨图层", icon: <Svg><path d="M7 1h6v5H7zM1 9h6v5H1z" fill={SKY} /><path d="M7.5 6v3" stroke={SKY} />{bulb}</Svg> },
  { label: "校验", menu: true, icon: <Svg><path d="M0.5 3.5h15v9H0.5z" stroke={BLUE} fill="#dcebfb" /><path d="M5 4h7v8H5z" fill="#fff" /><path d="M6 8l2 2 3-4" stroke={BLUE} /></Svg> },
  { label: "提示", icon: <Svg><path d="M0.5 2.5h15v9H0.5z" stroke={BLUE} fill="#dcebfb" /><path d="M5 3h6v8H5z" fill="#fff" /><path d="M6 7l2 2 3-4" stroke={BLUE} />{bulb}</Svg> },
];

const drawTools = ["point", "line", "rect", "polygon", "arc", "circle", "textTool"];

const SectionEditor = () => {
  const [tool, setTool] = useState("line");
  return (
    <div role="dialog" aria-label="异形截面编辑器" className="absolute top-[38px] right-0 left-[579px] overflow-hidden border-b border-[#c3c7d0] bg-white text-[#333]">
      <h2 className="flex h-[27px] items-center bg-[#2d7fe0] pl-[9px] text-white">异形截面编辑器</h2>
      <div className="border-l-2 border-[#c3c7d0]">
        <div className="flex h-[29px] items-center gap-px border-b-2 border-[#c3c3c9] pt-0.5">
          <Grip />
          <EditorButton icon="grid" label="设置网格" />
          <EditorButton icon="importIcon" label="导入" caret />
          <EditorButton icon="exportIcon" label="导出" />
          <Divider />
          <EditorButton icon="undo" label="撤消" disabled />
          <EditorButton icon="redo" label="恢复" disabled />
          <Divider />
          <EditorButton icon="pickSection" label="从CAD选择截面图" caret />
          <Divider />
          <EditorButton icon="insertPoint" label="设置插入点" />
        </div>
        <div className="flex h-[27px] items-center gap-px border-b border-[#c3c3c9] pt-px">
          <Grip />
          <EditorButton icon="erase" label="删除" />
          <Divider />
          <EditorButton icon="copy" label="复制" />
          <EditorButton icon="mirror" label="镜像" />
          <EditorButton icon="move" label="移动" />
          <EditorButton icon="rotate" label="旋转" />
          <EditorButton icon="stretch" label="拉伸" />
          <Divider />
          <EditorButton icon="extend" label="延伸" caret />
          <EditorButton icon="breakIcon" label="打断" caret />
          <Divider />
          <EditorButton icon="shield" label="截面校验" />
          <span className="h-full w-0.5 shrink-0 bg-[#c3c3c9]" />
          <Grip />
          <EditorButton icon="parallel" label="平行" caret />
        </div>
        <div className="flex h-[414px] bg-black">
          <div className="flex w-[43px] shrink-0 flex-col gap-[5px] border-r border-b border-[#c3c7d0] bg-white pl-1">
            <span className="mt-2 ml-1 h-0.5 w-[26px] shrink-0 bg-[repeating-linear-gradient(to_right,#111_0_2px,transparent_2px_4px)]" />
            {drawTools.map((name) => (
              <div key={name} className="flex items-center">
                <button
                  type="button"
                  aria-label={name}
                  onClick={() => setTool(name)}
                  className={clsx(
                    "flex h-[22px] w-[26px] items-center justify-center rounded-[3px] border",
                    tool === name ? "border-[#4f9cf5] bg-[#e9f3fe]" : "border-[#f8f8f8]"
                  )}
                >
                  {icons[name]}
                </button>
                {name === "arc" && <Caret className="text-[#555]" />}
              </div>
            ))}
          </div>
          <SectionCanvas />
        </div>
      </div>
      <footer className="flex h-[42px] items-center gap-1.5 pl-[3px]">
        <span className="w-[149px] text-[13px]">X=-116 Y=1162</span>
        <span className="w-[61px] text-[13px]">0</span>
        <button type="button" aria-label="正交" className="flex size-[25px] items-center justify-center border border-[#8f8f8f] bg-[#cfcfd0]">
          <Svg><path d="M2.5 2v11.5H15M2.5 9.5h4v4" stroke="#444" /></Svg>
        </button>
        {snapButtons.map(({ label, icon, menu }) => (
          <button
            key={label}
            type="button"
            aria-label={label}
            className={clsx("flex h-[25px] items-center justify-center gap-1 border border-[#2f8de8] bg-white", menu ? "w-9" : "w-[25px]")}
          >
            {icon}
            {menu && <Caret />}
          </button>
        ))}
        <span>指定第一点</span>
      </footer>
    </div>
  );
};

export default function App() {
  return (
    <div className="relative flex h-screen w-full flex-col overflow-hidden bg-white font-['Open_Sans','Noto_Sans_CJK_SC',sans-serif] text-[12px] leading-4 text-black">
      <MenuBar />
      <Ribbon />
      <OptionBar />
      <main className="flex min-h-0 flex-1">
        <NavPanel />
        <div className="ml-1 flex w-[280px] shrink-0 flex-col">
          <ComponentPanel />
          <PropertyPanel />
        </div>
        <div className="flex w-1 shrink-0 flex-col">
          <button type="button" aria-label="收起面板" className="mt-[409px] flex h-[100px] items-center bg-[#5f6b76]">
            <svg width="4" height="6" viewBox="0 0 4 6" aria-hidden="true">
              <path d="M3.5 0v6L0.5 3z" fill="#c5cbd0" />
            </svg>
          </button>
        </div>
        <div className="relative min-w-0 flex-1 overflow-hidden bg-black">
          <Scene />
          <SectionEditor />
        </div>
      </main>

      {/* red markup rings */}
      <svg width="92" height="63" viewBox="0 0 92 63" fill="none" aria-hidden="true" className="pointer-events-none absolute top-[95px] left-[534px]">
        <ellipse cx="46" cy="31" rx="45" ry="30" stroke="#e04444" />
      </svg>
      <svg width="46" height="38" viewBox="0 0 46 38" fill="none" aria-hidden="true" className="pointer-events-none absolute top-[33px] left-[818px]">
        <ellipse cx="23" cy="19" rx="22" ry="18" stroke="#e04444" />
      </svg>
    </div>
  );
}
